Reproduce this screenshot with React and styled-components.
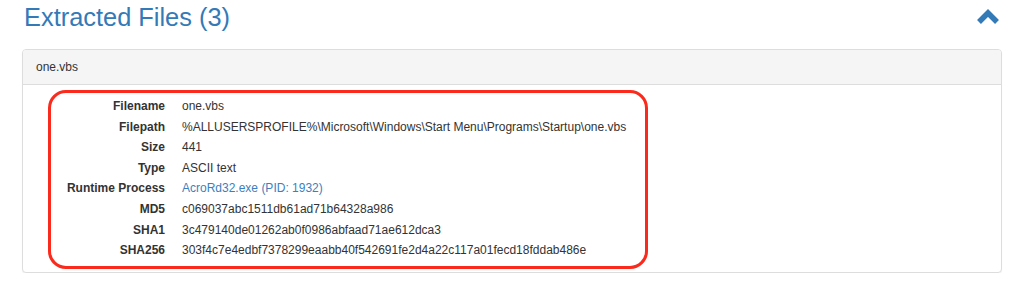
import { Fragment } from "react";
import styled, { createGlobalStyle } from "styled-components";

const GlobalStyle = createGlobalStyle`
  body {
    margin: 0;
    background: #fff;
    font-family: "Liberation Sans", Arial, Helvetica, sans-serif;
    color: #333;
  }
`;

const Page = styled.div`
  padding: 0 22px 0 22px;
  width: 980px;
`;

const TitleRow = styled.div`
  display: flex;
  align-items: center;
  justify-content: space-between;
  height: 49px;
`;

const Title = styled.h2`
  margin: 0;
  padding: 0 0 15px 2px;
  font-size: 25.4px;
  font-weight: normal;
  color: #337ab7;
  line-height: 30px;
`;

const Toggle = styled.button`
  border: 0;
  background: none;
  padding: 0;
  margin: 0 1px 16px 0;
  width: 26px;
  height: 20px;
  cursor: pointer;
`;

const Panel = styled.div`
  border: 1px solid #ddd;
  border-radius: 4px;
  background: #fff;
  box-shadow: 0 1px 1px rgba(0, 0, 0, 0.05);
`;

const PanelHeading = styled.div`
  background: #f5f5f5;
  border-bottom: 1px solid #ddd;
  border-radius: 3px 3px 0 0;
  height: 34px;
  padding: 0 13px;
  display: flex;
  align-items: center;
  font-size: 12px;
`;

const PanelBody = styled.div`
  padding: 5px 0 3px 25px;
`;

const Marked = styled.div`
  width: 594px;
  border: 3px solid #fa2a1c;
  border-radius: 18px;
  padding: 3px 0 5px;
`;

const Details = styled.dl`
  margin: 0;
  display: grid;
  grid-template-columns: 114px auto;
  column-gap: 17px;
  font-size: 12px;
  line-height: 20.6px;
`;

const Label = styled.dt`
  font-weight: bold;
  text-align: right;
  white-space: nowrap;
`;

const Value = styled.dd`
  margin: 0;
  white-space: nowrap;
`;

const Link = styled.a`
  color: #3b7fc0;
  text-decoration: none;
`;

const rows = [
  ["Filename", "one.vbs"],
  [
    "Filepath",
    "%ALLUSERSPROFILE%\\Microsoft\\Windows\\Start Menu\\Programs\\Startup\\one.vbs",
  ],
  ["Size", "441"],
  ["Type", "ASCII text"],
  ["Runtime Process", "AcroRd32.exe (PID: 1932)", true],
  ["MD5", "c069037abc1511db61ad71b64328a986"],
  ["SHA1", "3c479140de01262ab0f0986abfaad71ae612dca3"],
  [
    "SHA256",
    "303f4c7e4edbf7378299eaabb40f542691fe2d4a22c117a01fecd18fddab486e",
  ],
];

export default function App() {
  return (
    <>
      <GlobalStyle />
      <Page>
        <TitleRow>
          <Title>Extracted Files (3)</Title>
          <Toggle aria-label="collapse">
            <svg width="26" height="20" viewBox="0 0 26 20">
              <polyline
                points="4,15 13,6 22,15"
                fill="none"
                stroke="#337ab7"
                strokeWidth="5.5"
                strokeLinejoin="miter"
              />
            </svg>
          </Toggle>
        </TitleRow>
        <Panel>
          <PanelHeading>one.vbs</PanelHeading>
          <PanelBody>
            <Marked>
              <Details>
                {rows.map(([k, v, link]) => (
                  <Fragment key={k}>
                    <Label>{k}</Label>
                    <Value>{link ? <Link href="#">{v}</Link> : v}</Value>
                  </Fragment>
                ))}
              </Details>
            </Marked>
          </PanelBody>
        </Panel>
      </Page>
    </>
  );
}
